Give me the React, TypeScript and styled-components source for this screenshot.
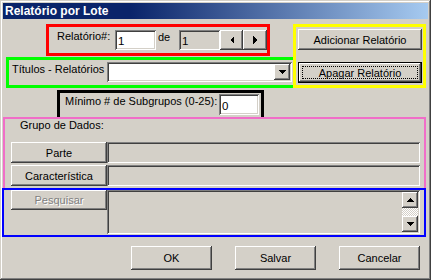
import React from 'react';
import styled, { createGlobalStyle, css } from 'styled-components';

const Global = createGlobalStyle`
  html, body { margin: 0; padding: 0; background: #d4d0c8; }
  body { font-family: "Liberation Sans", Arial, sans-serif; font-size: 11px; color: #000; }
  * { box-sizing: border-box; }
`;

const raisedBevel = css`
  background: #d4d0c8;
  box-shadow: inset -1px -1px #404040, inset 1px 1px #fff, inset -2px -2px #808080, inset 2px 2px #d4d0c8;
`;

const sunkenBevel = css`
  box-shadow: inset 1px 1px #808080, inset -1px -1px #fff, inset 2px 2px #404040, inset -2px -2px #d4d0c8;
`;

const Window = styled.div`
  width: 431px;
  height: 280px;
  padding: 3px;
  background: #d4d0c8;
  display: flex;
  flex-direction: column;
  box-shadow: inset -1px -1px #404040, inset 1px 1px #d4d0c8, inset -2px -2px #808080, inset 2px 2px #fff;
`;

const TitleBar = styled.div`
  height: 16px;
  padding-left: 2px;
  background: linear-gradient(to right, #0a246a 0%, #0a246a 30%, #a6caf0 100%);
  color: #fff;
  font-weight: bold;
  font-size: 12px;
  line-height: 16px;
  white-space: nowrap;
`;

const TopSection = styled.div`
  display: flex;
  margin-top: 5px;
  margin-left: 3px;
`;

const LeftCol = styled.div`
  width: 287px;
  display: flex;
  flex-direction: column;
`;

const Frame = styled.div<{ $color: string; $w: number; $h: number; $b?: number }>`
  width: ${p => p.$w}px;
  height: ${p => p.$h}px;
  border: ${p => p.$b ?? 3}px solid ${p => p.$color};
  display: flex;
`;

const RedBox = styled(Frame)`
  margin-left: 40px;
  align-items: flex-start;
  padding: 3px 0 0 8px;
`;

const GreenBox = styled(Frame)`
  margin-top: 1px;
  border-right: none;
  align-items: flex-start;
  padding: 2px 0 0 3px;
`;

const YellowBox = styled(Frame)`
  flex-direction: column;
  padding: 2px 0 0 2px;
  gap: 12px;
`;

const BlackBox = styled(Frame)`
  margin-top: 2px;
  margin-left: 54px;
  border-bottom: none;
  align-items: flex-start;
  padding: 1px 0 0 5px;
`;

const PinkBox = styled(Frame)`
  border-bottom: none;
  flex-direction: column;
  padding: 0 0 0 6px;
`;

const BlueBox = styled(Frame)`
  margin-left: -1px;
  padding: 0 0 0 7px;
`;

const Label = styled.span<{ $w: number; $top?: number; $pad?: number }>`
  width: ${p => p.$w}px;
  line-height: 13px;
  margin-top: ${p => p.$top ?? 0}px;
  padding-left: ${p => p.$pad ?? 0}px;
  white-space: nowrap;
  flex: none;
`;

const Field = styled.div<{ $w: number; $h: number; $white?: boolean }>`
  width: ${p => p.$w}px;
  height: ${p => p.$h}px;
  background: ${p => (p.$white ? '#fff' : '#d4d0c8')};
  ${sunkenBevel};
  display: flex;
  align-items: center;
  padding: 2px 0 0 3px;
  font-size: 11.5px;
  flex: none;
`;

const Button = styled.div<{ $w: number; $h: number; $disabled?: boolean }>`
  width: ${p => p.$w}px;
  height: ${p => p.$h}px;
  ${raisedBevel};
  display: flex;
  align-items: center;
  justify-content: center;
  flex: none;
  white-space: nowrap;
  color: ${p => (p.$disabled ? '#808080' : '#000')};
  text-shadow: ${p => (p.$disabled ? '1px 1px #fff' : 'none')};
`;

const DefaultButton = styled.div<{ $w: number; $h: number }>`
  width: ${p => p.$w}px;
  height: ${p => p.$h}px;
  border: 1px solid #000;
  background: #d4d0c8;
  box-shadow: inset -1px -1px #404040, inset 1px 1px #fff, inset -2px -2px #808080;
  padding: 3px;
  display: flex;
  flex: none;
`;

const FocusRect = styled.div`
  flex: 1;
  border: 1px dotted #000;
  display: flex;
  align-items: center;
  justify-content: center;
  white-space: nowrap;
`;

const Combo = styled.div`
  width: 185px;
  height: 20px;
  background: #fff;
  ${sunkenBevel};
  padding: 2px;
  display: flex;
  justify-content: flex-end;
  flex: none;
`;

const SmallButton = styled.div<{ $w: number; $h: number }>`
  width: ${p => p.$w}px;
  height: ${p => p.$h}px;
  ${raisedBevel};
  display: flex;
  align-items: center;
  justify-content: center;
  flex: none;
`;

const GroupTitle = styled.div`
  line-height: 13px;
  margin: 0 0 10px 9px;
`;

const Rows = styled.div`
  display: flex;
  flex-direction: column;
  gap: 2px;
`;

const Row = styled.div`
  display: flex;
  align-items: flex-start;
`;

const TextArea = styled.div`
  width: 313px;
  height: 44px;
  background: #d4d0c8;
  ${sunkenBevel};
  padding: 2px;
  display: flex;
  justify-content: flex-end;
`;

const ScrollBar = styled.div`
  width: 16px;
  display: flex;
  flex-direction: column;
`;

const Track = styled.div`
  flex: 1;
  background: repeating-conic-gradient(#fff 0 25%, #d4d0c8 0 50%) 0 0 / 2px 2px;
`;

const Footer = styled.div`
  display: flex;
  gap: 23px;
  margin-top: 9px;
  padding-left: 128px;
`;

const Tri = ({ dir }: { dir: 'l' | 'r' | 'u' | 'd' }) => {
  const pts = {
    l: '4,0 0,4 4,8',
    r: '0,0 4,4 0,8',
    u: '0,4 4,0 8,4',
    d: '0,0 8,0 4,4',
  }[dir];
  const horiz = dir === 'l' || dir === 'r';
  return (
    <svg width={horiz ? 4 : 8} height={horiz ? 8 : 4} viewBox={horiz ? '0 0 4 8' : '0 0 8 4'} shapeRendering="crispEdges">
      <polygon points={pts} fill="#000" />
    </svg>
  );
};

export default function App() {
  return (
    <>
      <Global />
      <Window>
        <TitleBar>Relatório por Lote</TitleBar>
        <TopSection>
          <LeftCol>
            <RedBox $color="#ff0000" $w={224} $h={32}>
              <Label $w={58}>Relatório#:</Label>
              <Field $w={41} $h={20} $white>1</Field>
              <Label $w={23} $pad={2} $top={1}>de</Label>
              <Field $w={41} $h={20}>1</Field>
              <SmallButton $w={23} $h={20}><Tri dir="l" /></SmallButton>
              <SmallButton $w={24} $h={20}><Tri dir="r" /></SmallButton>
            </RedBox>
            <GreenBox $color="#00ff00" $w={287} $h={31}>
              <Label $w={95} $top={1}>Títulos - Relatórios</Label>
              <Combo>
                <SmallButton $w={16} $h={16}><Tri dir="d" /></SmallButton>
              </Combo>
            </GreenBox>
          </LeftCol>
          <YellowBox $color="#ffff00" $w={133} $h={64}>
            <Button $w={124} $h={21}>Adicionar Relatório</Button>
            <DefaultButton $w={124} $h={21}>
              <FocusRect>Apagar Relatório</FocusRect>
            </DefaultButton>
          </YellowBox>
        </TopSection>
        <BlackBox $color="#000" $w={207} $h={27}>
          <Label $w={154} $top={1}>Mínimo # de Subgrupos (0-25):</Label>
          <Field $w={40} $h={21} $white>0</Field>
        </BlackBox>
        <PinkBox $color="#f06ec8" $w={423} $h={71} $b={2}>
          <GroupTitle>Grupo de Dados:</GroupTitle>
          <Rows>
            <Row>
              <Button $w={96} $h={21}>Parte</Button>
              <Field $w={313} $h={21} />
            </Row>
            <Row>
              <Button $w={96} $h={21}>Característica</Button>
              <Field $w={313} $h={21} />
            </Row>
          </Rows>
        </PinkBox>
        <BlueBox $color="#0000ff" $w={424} $h={49} $b={2}>
          <Row>
            <Button $w={96} $h={20} $disabled>Pesquisar</Button>
            <TextArea>
              <ScrollBar>
                <SmallButton $w={16} $h={16}><Tri dir="u" /></SmallButton>
                <Track />
                <SmallButton $w={16} $h={16}><Tri dir="d" /></SmallButton>
              </ScrollBar>
            </TextArea>
          </Row>
        </BlueBox>
        <Footer>
          <Button $w={81} $h={24}>OK</Button>
          <Button $w={81} $h={24}>Salvar</Button>
          <Button $w={81} $h={24}>Cancelar</Button>
        </Footer>
      </Window>
    </>
  );
}
